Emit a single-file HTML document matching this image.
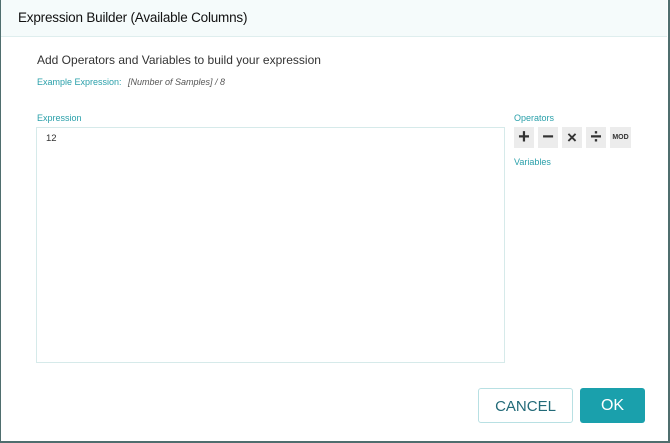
<!DOCTYPE html>
<html><head><style>
body{margin:0;width:670px;height:443px;background:#fff;font-family:"Liberation Sans",sans-serif;position:relative;overflow:hidden}
.frame{position:absolute;left:0;top:0;border-left:1px solid #4f6e6e;border-right:2px solid #4f6e6e;border-bottom:2px solid #4f6e6e;box-sizing:border-box;width:670px;height:443px}
.hdr{position:absolute;left:1px;top:0;width:666px;height:36px;background:#f5fbfb;border-bottom:1px solid #dfeeee}
.hdr span{position:absolute;left:17px;top:10px;font-size:13.5px;color:#111;letter-spacing:-0.2px}
.t{position:absolute;white-space:nowrap}
.ta{position:absolute;left:36px;top:127px;width:469px;height:236px;border:1px solid #d6eaea;box-sizing:border-box}
.op{position:absolute;top:127px;width:20px;height:21px;background:#ececec;color:#333;font-weight:bold;text-align:center;line-height:21px;font-size:20px}
.btn{position:absolute;top:388px;height:35px;box-sizing:border-box;border-radius:3px;text-align:center;line-height:35px;font-size:15px}
</style></head><body>
<div class="frame"></div>
<div class="hdr"><span>Expression Builder (Available Columns)</span></div>
<div class="t" style="left:37px;top:53px;font-size:12px;color:#333">Add Operators and Variables to build your expression</div>
<div class="t" style="left:37px;top:77px;font-size:9px;color:#2aa0aa">Example Expression:</div>
<div class="t" style="left:128px;top:77px;font-size:9px;color:#555;font-style:italic">[Number of Samples] / 8</div>
<div class="t" style="left:37px;top:113px;font-size:9px;color:#2aa0aa">Expression</div>
<div class="ta"></div>
<div class="t" style="left:46px;top:133px;font-size:9.5px;color:#333">12</div>
<div class="t" style="left:514px;top:113px;font-size:9px;color:#2aa0aa">Operators</div>
<div class="op" style="left:514px">+</div>
<div class="op" style="left:538px">−</div>
<div class="op" style="left:562px;font-size:17px">×</div>
<div class="op" style="left:586px">÷</div>
<div class="op" style="left:610px;width:21px;font-size:7px">MOD</div>
<div class="t" style="left:514px;top:157px;font-size:9px;color:#2aa0aa">Variables</div>
<div class="btn" style="left:478px;width:95px;border:1px solid #b8e0e3;color:#226a78">CANCEL</div>
<div class="btn" style="left:580px;width:65px;background:#1aa0ac;color:#fff;font-size:16px">OK</div>
</body></html>
